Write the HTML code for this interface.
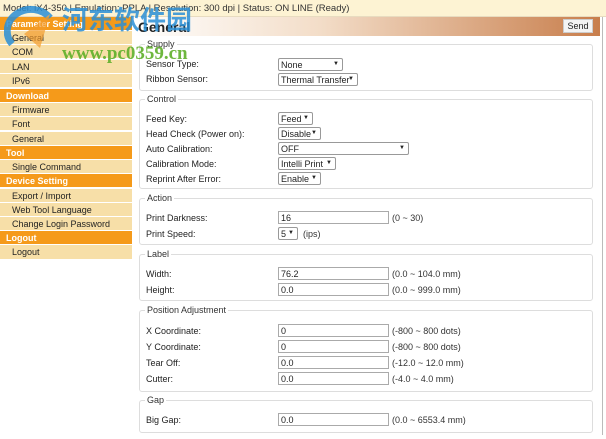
<!DOCTYPE html>
<html><head><meta charset="utf-8"><style>
*{margin:0;padding:0;box-sizing:border-box}
body{width:606px;height:439px;overflow:hidden;background:#fff;font-family:"Liberation Sans",Arial,sans-serif;font-size:9px;color:#222;position:relative}
.a{position:absolute;white-space:nowrap}
#top{left:0;top:0;width:606px;height:17px;background:#fdf3d3;border-bottom:1px solid #e8dcc0;padding:3px 0 0 3px;font-size:9.5px;color:#333}
.r{position:absolute;left:0;width:132px;height:14px;background:#f7dfa8;border-bottom:1px solid #fff;padding:2px 0 0 12px;font-size:9px;color:#222}
.h{background:#f59a1a;color:#fff;font-weight:bold;padding-left:6px}
#hdr{left:133px;top:17px;width:467px;height:19px;background:linear-gradient(90deg,#fff 0%,#f3ddc8 40%,#c87e4c 100%)}
#vl{left:602px;top:17px;width:1px;height:418px;background:#bbb}
.fs{position:absolute;left:139px;width:454px;border:1px solid #ddd;border-radius:3px}
.lg{position:absolute;left:5px;top:-6px;background:#fff;padding:0 2px;font-size:9px;color:#333}
.lb{position:absolute;left:146px;font-size:9px;color:#222}
.in{position:absolute;left:278px;height:13px;border:1px solid #aaa;background:#fff;padding:1px 0 0 2px;font-size:9px}
.sel{position:absolute;left:278px;height:13px;border:1px solid #999;border-radius:2px;background:#fff;padding:1px 0 0 2px;font-size:9px}
.sel:after{content:"▼";position:absolute;right:3px;top:2px;font-size:6px}
.rg{position:absolute;left:392px;font-size:9px;color:#333}
</style></head><body>
<div class="a" id="top">Model: iX4-350 | Emulation: PPLA | Resolution: 300 dpi | Status: ON LINE (Ready)</div>

<div class="r h" style="top:17px">Parameter Setting</div>
<div class="r" style="top:31px">General</div>
<div class="r" style="top:45px">COM</div>
<div class="r" style="top:60px">LAN</div>
<div class="r" style="top:74px">IPv6</div>
<div class="r h" style="top:89px">Download</div>
<div class="r" style="top:103px">Firmware</div>
<div class="r" style="top:117px">Font</div>
<div class="r" style="top:132px">General</div>
<div class="r h" style="top:146px">Tool</div>
<div class="r" style="top:160px">Single Command</div>
<div class="r h" style="top:174px">Device Setting</div>
<div class="r" style="top:189px">Export / Import</div>
<div class="r" style="top:203px">Web Tool Language</div>
<div class="r" style="top:217px">Change Login Password</div>
<div class="r h" style="top:231px">Logout</div>
<div class="r" style="top:245px;height:15px">Logout</div>

<div class="a" id="hdr"></div>
<div class="a" style="left:138px;top:19px;font-size:14px;font-weight:bold;color:#222">General</div>
<div class="a" style="left:563px;top:19px;width:30px;height:14px;background:#f4f4f4;border:1px solid #ccc;font-size:9px;text-align:center;padding-top:1px">Send</div>
<div class="a" id="vl"></div>

<div class="fs" style="top:44px;height:47px"><span class="lg">Supply</span></div>
<div class="lb" style="top:59px">Sensor Type:</div><div class="sel" style="top:58px;width:65px">None</div>
<div class="lb" style="top:74px">Ribbon Sensor:</div><div class="sel" style="top:73px;width:80px">Thermal Transfer</div>

<div class="fs" style="top:99px;height:90px"><span class="lg">Control</span></div>
<div class="lb" style="top:114px">Feed Key:</div><div class="sel" style="top:112px;width:35px">Feed</div>
<div class="lb" style="top:129px">Head Check (Power on):</div><div class="sel" style="top:127px;width:43px">Disable</div>
<div class="lb" style="top:144px">Auto Calibration:</div><div class="sel" style="top:142px;width:131px">OFF</div>
<div class="lb" style="top:159px">Calibration Mode:</div><div class="sel" style="top:157px;width:58px">Intelli Print</div>
<div class="lb" style="top:174px">Reprint After Error:</div><div class="sel" style="top:172px;width:43px">Enable</div>

<div class="fs" style="top:198px;height:47px"><span class="lg">Action</span></div>
<div class="lb" style="top:213px">Print Darkness:</div><div class="in" style="top:211px;width:111px">16</div><div class="rg" style="top:213px">(0 ~ 30)</div>
<div class="lb" style="top:229px">Print Speed:</div><div class="sel" style="top:227px;width:20px">5</div><div class="rg" style="top:229px;left:303px">(ips)</div>

<div class="fs" style="top:254px;height:47px"><span class="lg">Label</span></div>
<div class="lb" style="top:269px">Width:</div><div class="in" style="top:267px;width:111px">76.2</div><div class="rg" style="top:269px">(0.0 ~ 104.0 mm)</div>
<div class="lb" style="top:285px">Height:</div><div class="in" style="top:283px;width:111px">0.0</div><div class="rg" style="top:285px">(0.0 ~ 999.0 mm)</div>

<div class="fs" style="top:310px;height:82px"><span class="lg">Position Adjustment</span></div>
<div class="lb" style="top:326px">X Coordinate:</div><div class="in" style="top:324px;width:111px">0</div><div class="rg" style="top:326px">(-800 ~ 800 dots)</div>
<div class="lb" style="top:342px">Y Coordinate:</div><div class="in" style="top:340px;width:111px">0</div><div class="rg" style="top:342px">(-800 ~ 800 dots)</div>
<div class="lb" style="top:358px">Tear Off:</div><div class="in" style="top:356px;width:111px">0.0</div><div class="rg" style="top:358px">(-12.0 ~ 12.0 mm)</div>
<div class="lb" style="top:374px">Cutter:</div><div class="in" style="top:372px;width:111px">0.0</div><div class="rg" style="top:374px">(-4.0 ~ 4.0 mm)</div>

<div class="fs" style="top:400px;height:33px"><span class="lg">Gap</span></div>
<div class="lb" style="top:415px">Big Gap:</div><div class="in" style="top:413px;width:111px">0.0</div><div class="rg" style="top:415px">(0.0 ~ 6553.4 mm)</div>

<svg class="a" style="left:4px;top:4px;opacity:.85" width="54" height="48" viewBox="0 0 54 48"><path d="M8 40 A22 20 0 1 1 46 14" fill="none" stroke="#2a8fd6" stroke-width="7"/><path d="M20 30 L46 10 L36 44 Z" fill="#f39a2a" opacity=".8"/></svg>
<div class="a" style="left:62px;top:4px;font-size:26px;font-weight:bold;color:#2a8fd6;opacity:.85;font-family:'Noto Sans CJK SC',sans-serif;line-height:30px">河东软件园</div>
<div class="a" style="left:62px;top:43px;font-size:19px;font-weight:bold;color:#5fb02a;opacity:.9;font-family:'Liberation Serif',serif">www.pc0359.cn</div>
</body></html>
